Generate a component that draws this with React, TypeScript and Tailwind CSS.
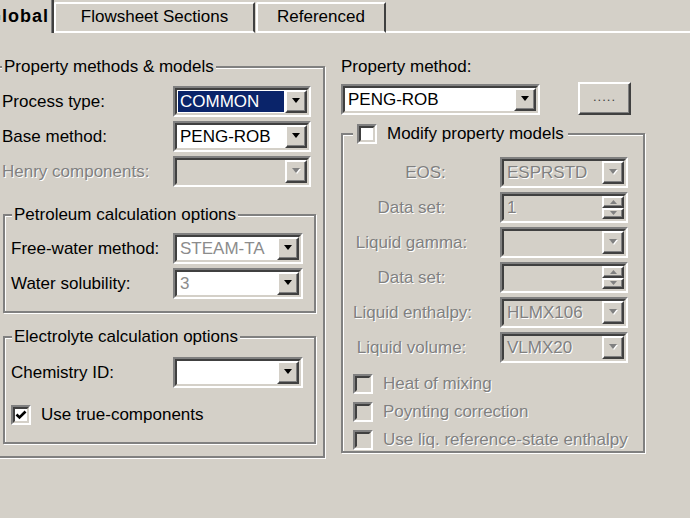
import type { ReactNode } from 'react';

// Windows-classic property sheet, drawn at ~1.7x scale
const DIS = 'text-[#808080] [text-shadow:1px_1px_0_#ffffff]';
const SUNKEN_OUT = 'border-2 border-t-[#808080] border-l-[#808080] border-r-white border-b-white';
const SUNKEN_IN = 'border-2 border-t-[#404040] border-l-[#404040] border-r-[#d4d0c8] border-b-[#d4d0c8]';
const RAISED =
  'border-2 border-t-white border-l-white border-r-[#404040] border-b-[#404040] shadow-[inset_-1px_-1px_0_#808080]';

function Arrow({ disabled, up }: { disabled?: boolean; up?: boolean }) {
  const d = up ? 'M1 5h8l-4-5z' : 'M1 0h8l-4 5z';
  return (
    <svg width="11" height="7" viewBox="0 0 11 7" aria-hidden="true">
      {disabled && <path d={d} fill="#ffffff" transform="translate(1 1)" />}
      <path d={d} fill={disabled ? '#808080' : '#000000'} />
    </svg>
  );
}

function Combo({
  value,
  w,
  disabled,
  dimText,
  selected,
}: {
  value?: string;
  w: string;
  disabled?: boolean;
  dimText?: boolean;
  selected?: boolean;
}) {
  return (
    <div className={`flex h-[31px] shrink-0 ${SUNKEN_OUT} ${w}`}>
      <div className={`flex flex-1 ${SUNKEN_IN}`}>
        <div className={`flex min-w-0 flex-1 p-[1px] ${disabled ? 'bg-[#d4d0c8]' : 'bg-white'}`}>
          <span
            className={`flex h-full flex-1 items-center whitespace-nowrap pl-[2px] leading-none ${
              selected ? 'bg-[#0a246a] text-white' : ''
            } ${disabled ? DIS : dimText ? 'text-[#8c8c8c]' : ''}`}
          >
            {value}
          </span>
        </div>
        <div className={`flex w-[22px] items-center justify-center bg-[#d4d0c8] ${RAISED}`}>
          <Arrow disabled={disabled} />
        </div>
      </div>
    </div>
  );
}

function Spin({ value, w }: { value?: string; w: string }) {
  return (
    <div className={`flex h-[31px] shrink-0 ${SUNKEN_OUT} ${w}`}>
      <div className={`flex flex-1 ${SUNKEN_IN}`}>
        <div className={`flex flex-1 items-center bg-[#d4d0c8] pl-[3px] leading-none ${DIS}`}>{value}</div>
        <div className="flex w-[22px] flex-col">
          <div className={`flex flex-1 items-center justify-center bg-[#d4d0c8] ${RAISED}`}>
            <svg width="7" height="4" viewBox="0 0 7 4" aria-hidden="true">
              <path d="M0 4h7L3.5 0z" fill="#808080" />
            </svg>
          </div>
          <div className={`flex flex-1 items-center justify-center bg-[#d4d0c8] ${RAISED}`}>
            <svg width="7" height="4" viewBox="0 0 7 4" aria-hidden="true">
              <path d="M0 0h7L3.5 4z" fill="#808080" />
            </svg>
          </div>
        </div>
      </div>
    </div>
  );
}

function Check({ checked, disabled }: { checked?: boolean; disabled?: boolean }) {
  return (
    <span className={`flex h-[20px] w-[20px] shrink-0 ${SUNKEN_OUT}`}>
      <span
        className={`flex flex-1 items-center justify-center ${SUNKEN_IN} ${
          disabled ? 'bg-[#d4d0c8]' : 'bg-white'
        }`}
      >
        {checked && (
          <svg width="12" height="12" viewBox="0 0 12 12" aria-hidden="true">
            <path d="M1.5 5.5l3 3 6-6" fill="none" stroke="#000" strokeWidth="2.6" />
          </svg>
        )}
      </span>
    </span>
  );
}

function Group({
  title,
  titleLeft,
  className,
  children,
}: {
  title: ReactNode;
  titleLeft: string;
  className: string;
  children: ReactNode;
}) {
  return (
    <div
      className={`relative border-2 border-[#808080] shadow-[inset_1px_1px_0_#ffffff,1px_1px_0_#ffffff] ${className}`}
    >
      <div className={`absolute -top-[11px] flex items-center bg-[#d4d0c8] leading-[20px] ${titleLeft}`}>
        {title}
      </div>
      {children}
    </div>
  );
}

function Row({
  label,
  labelW,
  disabled,
  children,
}: {
  label: string;
  labelW: string;
  disabled?: boolean;
  children: ReactNode;
}) {
  return (
    <div className="flex h-[31px] items-center">
      <span className={`shrink-0 whitespace-nowrap ${labelW} ${disabled ? DIS : ''}`}>{label}</span>
      {children}
    </div>
  );
}

const MODELS: { label: string; kind: 'combo' | 'spin'; value?: string; pad?: string }[] = [
  { label: 'EOS:', kind: 'combo', value: 'ESPRSTD', pad: 'pl-[28px]' },
  { label: 'Data set:', kind: 'spin', value: '1' },
  { label: 'Liquid gamma:', kind: 'combo' },
  { label: 'Data set:', kind: 'spin' },
  { label: 'Liquid enthalpy:', kind: 'combo', value: 'HLMX106' },
  { label: 'Liquid volume:', kind: 'combo', value: 'VLMX20' },
];

const OPTIONS = ['Heat of mixing', 'Poynting correction', 'Use liq. reference-state enthalpy'];

export default function App() {
  return (
    <div className="h-[518px] w-[690px] overflow-hidden bg-[#d4d0c8] font-['Liberation_Sans',Arial,sans-serif] text-[17px] text-black">
      {/* tab strip */}
      <div className="flex h-[33px] items-end">
        <div className="flex h-[33px] w-[54px] shrink-0 items-center justify-end whitespace-nowrap border-r-2 border-r-[#404040] pb-[1px] pr-[3px] shadow-[inset_-1px_0_0_#808080]">
          <span className="-ml-[30px] text-[18px] font-bold tracking-[1px]">Global</span>
        </div>
        <div className="flex h-[31px] w-[201px] shrink-0 items-center justify-center rounded-tl-[2px] border-2 border-t-white border-l-white border-r-[#404040] border-b-white pb-[2px]">
          Flowsheet Sections
        </div>
        <div className="ml-[1px] flex h-[31px] w-[130px] shrink-0 items-center justify-center rounded-tl-[2px] border-2 border-t-white border-l-white border-r-[#404040] border-b-white pb-[2px]">
          Referenced
        </div>
        <div className="h-[2px] flex-1 bg-white" />
      </div>

      <div className="flex">
        {/* left column */}
        <Group
          title="Property methods & models"
          titleLeft="left-[8px] px-[2px]"
          className="ml-[-8px] mt-[33px] w-[333px] shrink-0 pb-[12px] pl-[8px] pt-[18px]"
        >
          <div className="flex flex-col gap-[4px]">
            <Row label="Process type:" labelW="w-[171px]">
              <Combo value="COMMON" w="w-[138px]" selected />
            </Row>
            <Row label="Base method:" labelW="w-[171px]">
              <Combo value="PENG-ROB" w="w-[138px]" />
            </Row>
            <Row label="Henry components:" labelW="w-[171px]" disabled>
              <Combo w="w-[138px]" disabled />
            </Row>
          </div>

          <Group
            title="Petroleum calculation options"
            titleLeft="left-[7px] px-[2px]"
            className="ml-[1px] mt-[27px] w-[313px] pb-[12px] pl-[6px] pt-[17px]"
          >
            <div className="flex flex-col gap-[4px]">
              <Row label="Free-water method:" labelW="w-[162px]">
                <Combo value="STEAM-TA" w="w-[130px]" dimText />
              </Row>
              <Row label="Water solubility:" labelW="w-[162px]">
                <Combo value="3" w="w-[130px]" dimText />
              </Row>
            </div>
          </Group>

          <Group
            title="Electrolyte calculation options"
            titleLeft="left-[7px] px-[2px]"
            className="ml-[1px] mt-[23px] w-[313px] pb-[17px] pl-[6px] pt-[19px]"
          >
            <Row label="Chemistry ID:" labelW="w-[162px]">
              <Combo w="w-[130px]" />
            </Row>
            <label className="mt-[17px] flex h-[20px] items-center gap-[10px]">
              <Check checked />
              <span>Use true-components</span>
            </label>
          </Group>
        </Group>

        {/* right column */}
        <div className="ml-[16px] flex w-[304px] shrink-0 flex-col pt-[24px]">
          <span className="leading-[20px]">Property method:</span>
          <div className="mt-[5px] flex items-end">
            <Combo value="PENG-ROB" w="w-[199px]" />
            <button
              type="button"
              className={`ml-[38px] flex h-[33px] w-[53px] items-center justify-center bg-[#d4d0c8] pb-[4px] text-[13px] leading-none tracking-[1px] text-[#404040] ${RAISED}`}
            >
              .....
            </button>
          </div>

          <Group
            title={
              <>
                <Check />
                <span className="ml-[10px]">Modify property models</span>
              </>
            }
            titleLeft="left-[10px] px-[4px]"
            className="mt-[18px] w-[304px] pb-[1px] pl-[10px] pt-[22px]"
          >
            <div className="flex flex-col gap-[4px]">
              {MODELS.map((m, i) => (
                <div key={i} className="flex h-[31px] items-center">
                  <span className={`w-[117px] shrink-0 whitespace-nowrap text-center ${m.pad ?? ''} ${DIS}`}>
                    {m.label}
                  </span>
                  <div className="ml-[30px]">
                    {m.kind === 'combo' ? (
                      <Combo value={m.value} w="w-[128px]" disabled />
                    ) : (
                      <Spin value={m.value} w="w-[128px]" />
                    )}
                  </div>
                </div>
              ))}
            </div>
            <div className="mt-[11px] flex flex-col gap-[8px]">
              {OPTIONS.map((o) => (
                <label key={o} className="flex h-[20px] items-center gap-[10px]">
                  <Check disabled />
                  <span className={`whitespace-nowrap ${DIS}`}>{o}</span>
                </label>
              ))}
            </div>
          </Group>
        </div>
      </div>
    </div>
  );
}
